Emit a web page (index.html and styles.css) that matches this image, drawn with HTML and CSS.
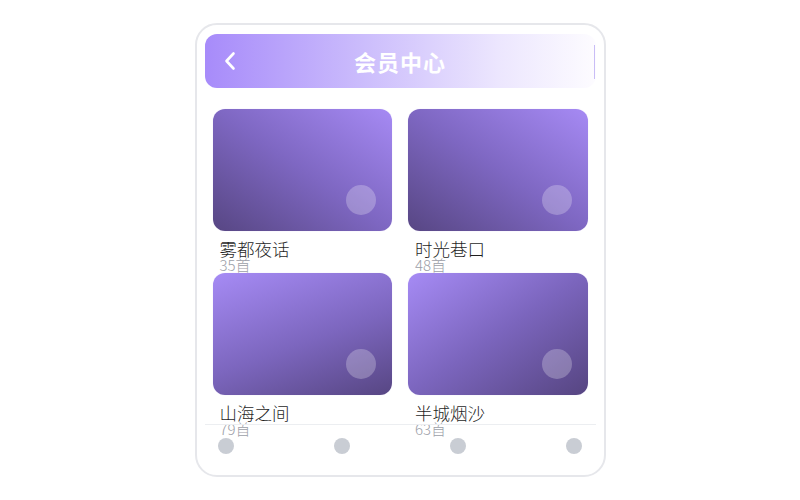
FILE: index.html
```html
<!DOCTYPE html>
<html lang="zh">
<head>
<meta charset="utf-8">
<title>会员中心</title>
<link rel="stylesheet" href="styles.css">
</head>
<body>
<div class="phone">
  <header class="topbar">
    <span class="back">
      <svg width="14" height="20" viewBox="0 0 14 20"><path d="M10.5 2.5 L3.5 10 L10.5 17.5" fill="none" stroke="#fff" stroke-width="2.6" stroke-linecap="round" stroke-linejoin="round"/></svg>
    </span>
    <h1 class="title">会员中心</h1>
    <span class="edge"></span>
  </header>
  <main class="grid">
    <div class="item">
      <div class="cover cover-a"><span class="dot"></span></div>
      <div class="name">雾都夜话</div>
      <div class="count">35首</div>
    </div>
    <div class="item">
      <div class="cover cover-a"><span class="dot"></span></div>
      <div class="name">时光巷口</div>
      <div class="count">48首</div>
    </div>
    <div class="item">
      <div class="cover cover-c"><span class="dot"></span></div>
      <div class="name">山海之间</div>
      <div class="count">79首</div>
    </div>
    <div class="item">
      <div class="cover cover-d"><span class="dot"></span></div>
      <div class="name">半城烟沙</div>
      <div class="count">63首</div>
    </div>
  </main>
  <nav class="tabs">
    <span class="tab"></span>
    <span class="tab"></span>
    <span class="tab"></span>
    <span class="tab"></span>
  </nav>
</div>
</body>
</html>
```
FILE: styles.css
```css
* { box-sizing: border-box; }
html, body { margin: 0; padding: 0; background: #fff; }
body {
  padding-top: 23px;
  font-family: "Noto Sans CJK SC", "Noto Sans", sans-serif;
}
.phone {
  width: 411px;
  height: 454px;
  margin: 0 auto;
  border: 2px solid #e6e7eb;
  border-radius: 22px;
  padding: 9px 8px 0 8px;
  overflow: hidden;
  display: flex;
  flex-direction: column;
}
.topbar {
  position: relative;
  height: 54px;
  border-radius: 12px;
  background: linear-gradient(90deg, #a78bfa 0%, #cbbcfc 40%, #ece6fe 75%, #fdfcff 100%);
  display: flex;
  align-items: center;
  justify-content: center;
  flex-shrink: 0;
}
.back {
  position: absolute;
  left: 18px;
  top: 17px;
  display: flex;
}
.title {
  margin: 0;
  font-size: 22px;
  font-weight: 700;
  color: #fff;
  letter-spacing: 1px;
  line-height: 1;
}
.edge {
  position: absolute;
  right: 1px;
  top: 11px;
  width: 1px;
  height: 34px;
  background: #c9bdf6;
}
.grid {
  margin-top: 21px;
  padding: 0 8px;
  display: grid;
  grid-template-columns: 1fr 1fr;
  grid-template-rows: 148px 148px;
  column-gap: 16px;
  row-gap: 16px;
  flex-shrink: 0;
}
.item { min-width: 0; }
.cover {
  position: relative;
  height: 122px;
  border-radius: 12px;
  box-shadow: 0 0 1px 0 rgba(167, 139, 250, 0.35);
}
.cover-a { background: linear-gradient(to bottom left, #a68af4 0%, #7e67c2 50%, #574683 100%); }
.cover-c { background: linear-gradient(160deg, #a68bf5 0%, #7c66be 55%, #574683 100%); }
.cover-d { background: linear-gradient(to bottom right, #a68bf5 0%, #7b65bd 50%, #564581 100%); }
.dot {
  position: absolute;
  right: 16px;
  bottom: 16px;
  width: 30px;
  height: 30px;
  border-radius: 50%;
  background: rgba(255, 255, 255, 0.25);
}
.name {
  margin: 9px 0 0 7px;
  font-size: 17.5px;
  font-weight: 300;
  line-height: 18px;
  color: #1f1f1f;
  white-space: nowrap;
}
.count {
  margin-left: 7px;
  font-size: 15px;
  font-weight: 300;
  line-height: 14px;
  color: #9ca0a8;
  white-space: nowrap;
}
.tabs {
  margin-top: 3px;
  border-top: 1px solid #eceef1;
  padding: 13px 13px 0 13px;
  display: flex;
  justify-content: space-between;
}
.tab {
  width: 16px;
  height: 16px;
  border-radius: 50%;
  background: #c9cdd4;
}
```
